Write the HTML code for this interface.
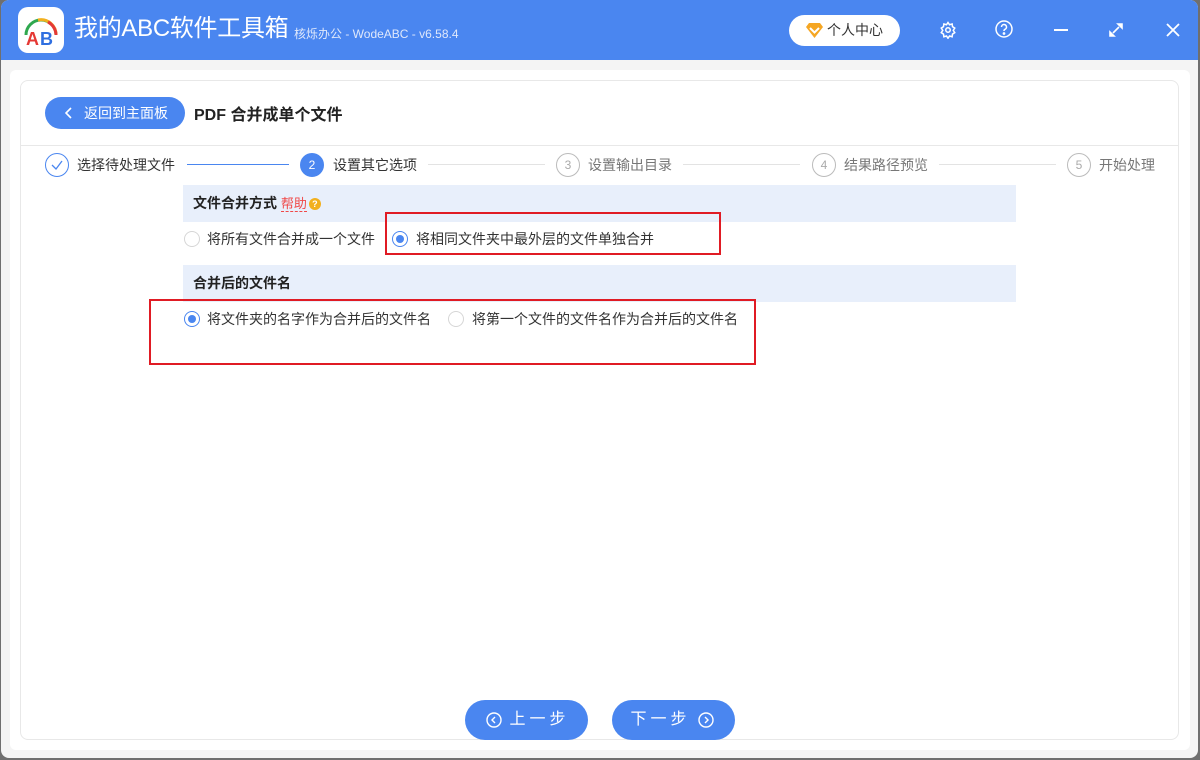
<!DOCTYPE html>
<html><head><meta charset="utf-8"><style>
*{margin:0;padding:0;box-sizing:border-box}
body{width:1200px;height:760px;overflow:hidden;background:#6f6f6f;font-family:"Liberation Sans","Noto Sans CJK SC",sans-serif;position:relative}
.win{position:absolute;left:1px;top:0;width:1197px;height:758px;background:#f4f4f4;border-radius:8px;overflow:hidden}
.hdr{position:absolute;left:0;top:0;width:100%;height:60px;background:#4a86f0}
.abs{position:absolute}
.outer{position:absolute;left:9px;top:70px;width:1180px;height:680px;background:#fff;border-radius:6px}
.card{position:absolute;left:20px;top:80px;width:1159px;height:660px;border:1px solid #e8e8e8;border-radius:8px;background:#fff}
.step{position:absolute;top:153px;height:24px;font-size:14px;color:#333;line-height:24px;white-space:nowrap}
.circ{position:absolute;top:153px;width:24px;height:24px;border-radius:50%;border:1px solid #bbb;color:#aaa;font-size:12px;text-align:center;line-height:22px}
.line{position:absolute;top:164px;height:1px;background:#e3e3e3}
.sec{position:absolute;left:183px;width:833px;height:37px;background:#e8effb;font-size:14px;font-weight:bold;color:#222;line-height:37px;padding-left:10px}
.radio{position:absolute;width:16px;height:16px;border-radius:50%;border:1px solid #d6d6d6;background:#fff}
.radio.on{border:1px solid #4a86f0}
.radio.on:after{content:"";position:absolute;left:3px;top:3px;width:8px;height:8px;border-radius:50%;background:#4a86f0}
.lbl{position:absolute;font-size:14px;color:#333;white-space:nowrap;line-height:16px}
.red{position:absolute;border:2px solid #e01b24}
.btn{position:absolute;top:700px;height:40px;border-radius:20px;background:#4a86f0;color:#fff;font-size:16px;line-height:40px;text-align:center;letter-spacing:4px}
</style></head><body>
<div class="win">
<div class="hdr">
 <div class="abs" style="left:17px;top:7px;width:46px;height:46px;background:#fff;border-radius:10px">
  <svg width="46" height="46" viewBox="0 0 46 46"><path d="M8 28 A15 15 0 0 1 38 28" fill="none" stroke="#2fa84f" stroke-width="3"/><path d="M20 13 A15 15 0 0 1 38 28" fill="none" stroke="#f2b01e" stroke-width="3"/><path d="M30 15 A15 15 0 0 1 38 28" fill="none" stroke="#e53935" stroke-width="3"/>
  <text x="8" y="38" font-family="Liberation Sans" font-weight="bold" font-size="18" fill="#e53935">A</text><text x="22" y="38" font-family="Liberation Sans" font-weight="bold" font-size="18" fill="#2f6fe0">B</text></svg>
 </div>
 <div class="abs" style="left:73px;top:13px;font-size:24px;color:#fff;line-height:32px;letter-spacing:-0.3px">我的ABC软件工具箱</div>
 <div class="abs" style="left:293px;top:25px;font-size:12px;color:#dfe8fb">核烁办公 - WodeABC - v6.58.4</div>
 <div class="abs" style="left:788px;top:15px;width:111px;height:31px;background:#fff;border-radius:16px;font-size:14px;color:#333;line-height:31px;padding-left:38px">个人中心
  <svg class="abs" style="left:17px;top:8px" width="17" height="15" viewBox="0 0 17 15"><path d="M3 0H14L17 4L8.5 15L0 4Z" fill="#f5a623"/><path d="M4 5L8.5 9.5L13 5" fill="none" stroke="#fff" stroke-width="2"/></svg></div>
 <svg class="abs" style="left:938px;top:21px" width="18" height="18" viewBox="0 0 24 24" fill="none" stroke="#fff" stroke-width="2"><circle cx="12" cy="12" r="3"/><path d="M12 2l2 3 3.5-1 .5 3.5 3 2-2 3 2 3-3 2-.5 3.5-3.5-1-2 3-2-3-3.5 1L6 17.5l-3-2 2-3-2-3 3-2L6.5 4 10 5z"/></svg>
 <svg class="abs" style="left:994px;top:20px" width="18" height="18" viewBox="0 0 18 18" fill="none" stroke="#fff" stroke-width="1.5"><circle cx="9" cy="9" r="8"/><path d="M6.5 7a2.5 2.5 0 1 1 3.5 2.3c-.7.3-1 .8-1 1.5V11"/><circle cx="9" cy="13.5" r=".6" fill="#fff"/></svg>
 <div class="abs" style="left:1053px;top:29px;width:14px;height:2px;background:#fff"></div>
 <svg class="abs" style="left:1108px;top:23px" width="14" height="14" viewBox="0 0 14 14" stroke="#fff" stroke-width="1.6" fill="#fff"><path d="M4 10L10 4"/><path d="M9 1h4v4z"/><path d="M1 9v4h4z"/></svg>
 <svg class="abs" style="left:1165px;top:23px" width="14" height="14" viewBox="0 0 14 14" stroke="#fff" stroke-width="1.8"><path d="M1 1L13 13M13 1L1 13"/></svg>
</div>
<div class="outer"></div>
</div>
<div class="card"></div>
<div class="abs" style="left:21px;top:145px;width:1157px;height:1px;background:#e8e8e8"></div>
<div class="abs" style="left:45px;top:97px;width:140px;height:32px;background:#4a86f0;border-radius:16px;color:#fff;font-size:14px;line-height:32px;padding-left:39px">返回到主面板
 <svg class="abs" style="left:20px;top:10px" width="8" height="12" viewBox="0 0 8 12" fill="none" stroke="#fff" stroke-width="1.6"><path d="M6 1L1 6l5 5"/></svg></div>
<div class="abs" style="left:194px;top:101px;font-size:16px;font-weight:bold;color:#222">PDF 合并成单个文件</div>

<div class="circ" style="left:45px;border-color:#4a86f0"><svg width="22" height="22" viewBox="0 0 22 22" fill="none" stroke="#4a86f0" stroke-width="1.3"><path d="M6 11l4 4 6-8"/></svg></div>
<div class="step" style="left:77px">选择待处理文件</div>
<div class="abs" style="left:187px;top:164px;width:102px;height:1px;background:#4a86f0"></div>
<div class="circ" style="left:300px;background:#4a86f0;border-color:#4a86f0;color:#fff">2</div>
<div class="step" style="left:333px">设置其它选项</div>
<div class="line" style="left:428px;width:117px"></div>
<div class="circ" style="left:556px">3</div>
<div class="step" style="left:588px;color:#777">设置输出目录</div>
<div class="line" style="left:683px;width:117px"></div>
<div class="circ" style="left:812px">4</div>
<div class="step" style="left:844px;color:#777">结果路径预览</div>
<div class="line" style="left:939px;width:117px"></div>
<div class="circ" style="left:1067px">5</div>
<div class="step" style="left:1099px;color:#777">开始处理</div>

<div class="sec" style="top:185px">文件合并方式 <span style="color:#f04848;font-weight:normal;font-size:13px;border-bottom:1px dashed #f04848;line-height:16px">帮助</span><span style="display:inline-block;width:12px;height:12px;border-radius:50%;background:#f2b01e;color:#fff;font-size:9px;line-height:12px;text-align:center;vertical-align:middle;margin-left:2px">?</span></div>
<div class="radio" style="left:184px;top:231px"></div>
<div class="lbl" style="left:207px;top:231px">将所有文件合并成一个文件</div>
<div class="radio on" style="left:392px;top:231px"></div>
<div class="lbl" style="left:416px;top:231px">将相同文件夹中最外层的文件单独合并</div>
<div class="red" style="left:385px;top:212px;width:336px;height:43px"></div>

<div class="sec" style="top:265px">合并后的文件名</div>
<div class="radio on" style="left:184px;top:311px"></div>
<div class="lbl" style="left:207px;top:311px">将文件夹的名字作为合并后的文件名</div>
<div class="radio" style="left:448px;top:311px"></div>
<div class="lbl" style="left:472px;top:311px">将第一个文件的文件名作为合并后的文件名</div>
<div class="red" style="left:149px;top:299px;width:607px;height:66px"></div>

<div class="btn" style="left:465px;width:123px;padding-left:26px">上一步
 <svg class="abs" style="left:21px;top:12px" width="16" height="16" viewBox="0 0 16 16" fill="none" stroke="#fff" stroke-width="1.4"><circle cx="8" cy="8" r="7"/><path d="M9 5L6 8l3 3"/></svg></div>
<div class="btn" style="left:612px;width:123px;padding-right:26px">下一步
 <svg class="abs" style="left:86px;top:12px" width="16" height="16" viewBox="0 0 16 16" fill="none" stroke="#fff" stroke-width="1.4"><circle cx="8" cy="8" r="7"/><path d="M7 5l3 3-3 3"/></svg></div>
</body></html>
